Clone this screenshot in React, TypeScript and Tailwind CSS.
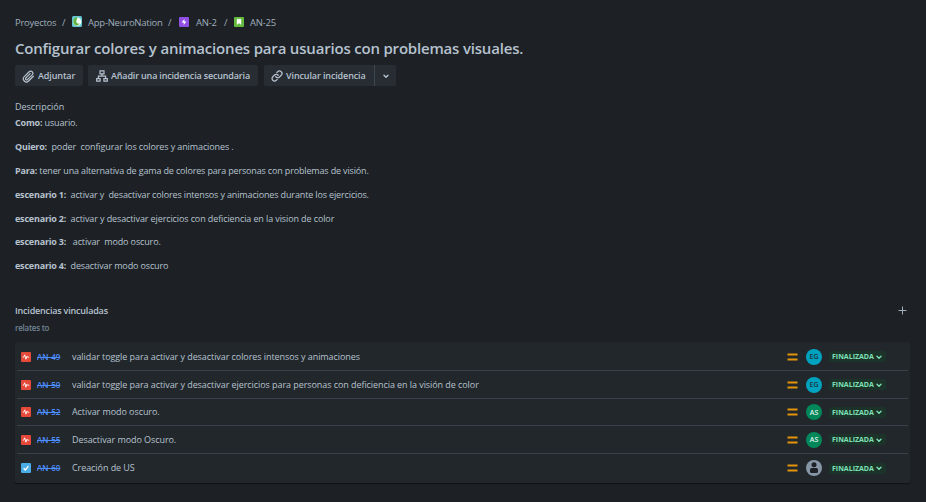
import React from "react";

const textFont = "font-['Open_Sans','Noto_Sans',sans-serif]";

function Paperclip() {
  return (
    <svg width="13" height="13" viewBox="0 0 24 24" fill="none" stroke="#b6c2cf" strokeWidth="2.2" strokeLinecap="round">
      <path d="M21 11.5l-8.8 8.8a5.6 5.6 0 0 1-8-8l9-9a3.9 3.9 0 0 1 5.6 5.6l-8.8 8.8a2 2 0 0 1-2.9-2.9l8-8" />
    </svg>
  );
}

function Tree() {
  return (
    <svg width="12" height="12" viewBox="0 0 12 12" fill="none" stroke="#b6c2cf" strokeWidth="1.2">
      <path d="M4 .8h4v3H4zM.7 8.6h3.4v2.6H.7zM7.9 8.6h3.4v2.6H7.9zM6 3.8v2.4M2.4 8.6V6.2h7.2v2.4" />
    </svg>
  );
}

function LinkIcon() {
  return (
    <svg width="12" height="12" viewBox="0 0 24 24" fill="none" stroke="#b6c2cf" strokeWidth="2.5" strokeLinecap="round">
      <path d="M9.5 13.5a5 5 0 0 0 7.5.5l3.4-3.4a5 5 0 0 0-7.1-7.1L11.6 5.2" />
      <path d="M14.5 10.5a5 5 0 0 0-7.5-.5l-3.4 3.4a5 5 0 0 0 7.1 7.1l1.7-1.7" />
    </svg>
  );
}

function Chevron({ color }: { color: string }) {
  return (
    <svg width="6" height="6" viewBox="0 0 6 6" fill="none" stroke={color} strokeWidth="1.4" strokeLinecap="round" strokeLinejoin="round">
      <path d="M1 2.2l2 2 2-2" />
    </svg>
  );
}

function ProjectIcon() {
  return (
    <svg width="10" height="11" viewBox="0 0 10 11">
      <rect width="10" height="11" rx="1.5" fill="#62c6d2" />
      <circle cx="5.200" cy="5.700" r="4.200" fill="#f4fbf5" />
      <path d="M5.200 1C2 1.500.8 4 1.400 6.500C2 8.800 3.500 9.800 5 9.600C6.500 9.300 7.300 8.500 7.500 7.500C5.800 8 4.300 7 4.300 5.200C4.300 3.500 5.500 2.800 5.200 1Z" fill="#62b545" />
    </svg>
  );
}

function EpicIcon() {
  return (
    <svg width="10" height="10" viewBox="0 0 10 10">
      <rect width="10" height="10" rx="1" fill="#904ee2" />
      <path d="M5.400 1.900L2.600 5.400H4.700V8.100L7.400 4.600H5.400Z" fill="#fff" />
    </svg>
  );
}

function StoryIcon() {
  return (
    <svg width="10" height="10" viewBox="0 0 10 10">
      <rect width="10" height="10" rx="1" fill="#63ba3c" />
      <path d="M3 2.200H7V7.600L5 5.900L3 7.600Z" fill="#fff" stroke="#fff" strokeWidth=".4" />
    </svg>
  );
}

function PulseIcon() {
  return (
    <svg width="10" height="10" viewBox="0 0 10 10">
      <rect width="10" height="10" rx="1" fill="#e5493a" />
      <path d="M1.800 5.200H2.700L3.700 2.800L4.900 7.200L5.900 4.200L6.600 5.200H8.200" fill="none" stroke="#fff" strokeWidth=".9" />
    </svg>
  );
}

function TaskIcon() {
  return (
    <svg width="10" height="10" viewBox="0 0 10 10">
      <rect width="10" height="10" rx="1" fill="#4bade8" />
      <path d="M2.600 5.200L4.300 6.900L7.400 3.200" fill="none" stroke="#fff" strokeWidth="1.400" />
    </svg>
  );
}

function Avatar({ who }: { who: string }) {
  if (who === "") {
    return (
      <svg width="16" height="16" viewBox="0 0 16 16">
        <circle cx="8" cy="8" r="8" fill="#8696a7" />
        <circle cx="8" cy="4.800" r="2.500" fill="#1d2125" />
        <path d="M4 9.500Q4 8 5.500 8H10.500Q12 8 12 9.500V11.500Q12 13 10.500 13H5.500Q4 13 4 11.500Z" fill="#1d2125" />
      </svg>
    );
  }
  const tone = who === "EG" ? "bg-[#00a3bf] text-[#1d3440]" : "bg-[#00875a] text-[#e6f3ee]";
  return (
    <span className={`flex size-4 items-center justify-center rounded-full text-[7px] font-semibold leading-none ${tone}`}>
      {who}
    </span>
  );
}

const issues = [
  { key: "AN-49", text: "validar toggle para activar y desactivar colores intensos y animaciones", who: "EG", h: "h-[28px] pt-px" },
  { key: "AN-50", text: "validar toggle para activar y desactivar ejercicios para personas con deficiencia en la visión de color", who: "EG", h: "h-[27px]" },
  { key: "AN-52", text: "Activar modo oscuro.", who: "AS", h: "h-[26px]" },
  { key: "AN-55", text: "Desactivar modo Oscuro.", who: "AS", h: "h-[27px]" },
  { key: "AN-60", text: "Creación de US", who: "", h: "h-[28px]" },
];

const lines = [
  { label: "Como:", text: " usuario.", h: "h-6", fit: "tracking-[-0.12px]" },
  { label: "Quiero:", text: "  poder  configurar los colores y animaciones .", h: "h-6", fit: "tracking-[-0.11px]" },
  { label: "Para:", text: " tener una alternativa de gama de colores para personas con problemas de visión.", h: "h-6", fit: "tracking-[-0.155px]" },
  { label: "escenario 1:", text: "  activar y  desactivar colores intensos y animaciones durante los ejercicios.", h: "h-6", fit: "tracking-[-0.14px]" },
  { label: "escenario 2:", text: "  activar y desactivar ejercicios con deficiencia en la vision de color", h: "h-[23px]", fit: "tracking-[-0.11px]" },
  { label: "escenario 3:", text: "   activar  modo oscuro.", h: "h-6", fit: "tracking-[-0.13px]" },
  { label: "escenario 4:", text: "  desactivar modo oscuro", h: "h-6", fit: "tracking-[-0.14px]" },
];

export default function App() {
  return (
    <div className={`h-[502px] w-[926px] overflow-hidden bg-[#1d2125] pl-[15px] pr-4 text-[9px] text-[#b6c2cf] ${textFont}`}>
      <nav className="flex h-[31px] items-end pb-px text-[9.5px] leading-[14px] tracking-[-0.25px] text-[#9fadbc]">
        <span className="w-[47px]">Proyectos</span>
        <span className="w-[10px]">/</span>
        <span className="flex h-[17px] w-[16px] items-center"><ProjectIcon /></span>
        <span className="w-[80px] whitespace-nowrap">App-NeuroNation</span>
        <span className="w-[11px]">/</span>
        <span className="flex h-[17px] w-[17px] items-center"><EpicIcon /></span>
        <span className="w-[28px]">AN-2</span>
        <span className="w-[10px]">/</span>
        <span className="flex h-[17px] w-[16px] items-center"><StoryIcon /></span>
        <span>AN-25</span>
      </nav>
      <h1 className="flex h-[34px] items-center whitespace-nowrap text-[15px] font-semibold leading-5 tracking-[-0.19px]">
        Configurar colores y animaciones para usuarios con problemas visuales.
      </h1>
      <div className="flex h-[21px] text-[9px] font-semibold tracking-[-0.17px]">
        <button className="mr-[5px] flex w-[68px] items-center gap-[3px] rounded-[2px] bg-[#282d33] pl-[7px] pt-px">
          <Paperclip /><span className="tracking-[-0.12px]">Adjuntar</span>
        </button>
        <button className="mr-[6px] flex w-[170px] items-center gap-[3px] whitespace-nowrap rounded-[2px] bg-[#282d33] pl-2 pt-px">
          <Tree /><span>Añadir una incidencia secundaria</span>
        </button>
        <button className="flex w-[110px] items-center gap-[3px] whitespace-nowrap rounded-l-[2px] bg-[#282d33] pl-[7px] pt-px">
          <LinkIcon /><span className="tracking-[-0.12px]">Vincular incidencia</span>
        </button>
        <button className="flex w-[22px] items-center justify-center rounded-r-[2px] border-l border-[#3d474f] bg-[#282d33]">
          <Chevron color="#b6c2cf" />
        </button>
      </div>
      <h2 className="mt-[14px] h-[14px] font-medium leading-[14px]">Descripción</h2>
      <div className="h-[190px] pt-0.5">
        {lines.map((l) => (
          <p key={l.label} className={`whitespace-pre leading-[14px] ${l.fit} ${l.h}`}>
            <b className="font-bold tracking-[-0.2px]">{l.label}</b>{l.text}
          </p>
        ))}
      </div>
      <div className="flex h-[14px] items-center justify-between pr-[3px] leading-[14px]">
        <h2 className="font-semibold tracking-[-0.19px]">Incidencias vinculadas</h2>
        <svg width="9" height="9" viewBox="0 0 9 9" stroke="#9fadbc" strokeWidth="1" className="mb-0.5"><path d="M4.500 .5v8M.5 4.500h8" /></svg>
      </div>
      <h3 className="mt-[3px] h-[21px] text-[8px] font-semibold leading-[14px] tracking-[-0.25px] text-[#738496]">relates to</h3>
      <div className="h-[141px] w-[895px] rounded-[2px] bg-[#22272b] px-0.5 shadow-[0_1px_1px_#101214]">
        {issues.map((r, i) => (
          <div key={r.key} className={i < 4 ? "border-b border-[#38414a]" : ""}>
            <div className={`flex items-center pl-1 ${r.h}`}>
              <span className="w-[16px]">{r.who ? <PulseIcon /> : <TaskIcon />}</span>
              <span className="w-[35px] text-[8px] font-semibold text-[#4c8dff] line-through">{r.key}</span>
              <span className="w-[715px] whitespace-nowrap tracking-[-0.07px]">{r.text}</span>
              <svg width="11" height="8" viewBox="0 0 11 8" className="mr-2"><path d="M.5 1.500h10M.5 6.500h10" stroke="#e2950b" strokeWidth="1.800" /></svg>
              <Avatar who={r.who} />
              <span className="ml-[7px] flex h-[11px] w-[57px] items-center gap-0.5 rounded-[2px] bg-[#1c3329] pl-[3px] text-[7px] font-bold leading-none text-[#7ee2b8]">
                FINALIZADA<Chevron color="#7ee2b8" />
              </span>
            </div>
          </div>
        ))}
      </div>
    </div>
  );
}
